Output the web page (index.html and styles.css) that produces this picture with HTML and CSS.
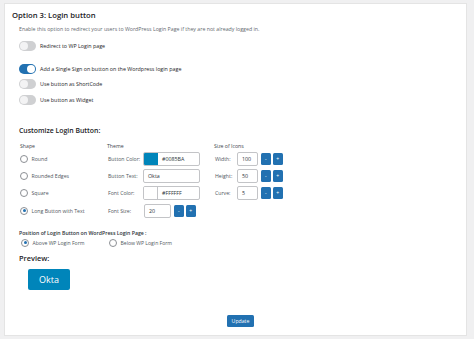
FILE: index.html
```html
<!DOCTYPE html>
<html>
<head>
<meta charset="utf-8">
<link rel="stylesheet" href="styles.css">
</head>
<body>
<div class="panel">
  <h2 class="title">Option 3: Login button</h2>
  <div class="content">
    <p class="desc">Enable this option to redirect your users to WordPress Login Page if they are not already logged in.</p>
    <div class="toggle-row first"><span class="switch"></span><span>Redirect to WP Login page</span></div>
    <div class="toggle-row second"><span class="switch on"></span><span>Add a Single Sign on button on the Wordpress login page</span></div>
    <div class="toggle-row"><span class="switch"></span><span>Use button as ShortCode</span></div>
    <div class="toggle-row"><span class="switch"></span><span>Use button as Widget</span></div>

    <h3 class="subtitle">Customize Login Button:</h3>
    <div class="grid">
      <div class="col shape">
        <div class="head">Shape</div>
        <div class="row"><span class="radio"></span>Round</div>
        <div class="row"><span class="radio"></span>Rounded Edges</div>
        <div class="row"><span class="radio"></span>Square</div>
        <div class="row last"><span class="radio checked"></span>Long Button with Text</div>
      </div>
      <div class="col theme">
        <div class="head">Theme</div>
        <div class="row"><span class="lbl">Button Color:</span><span class="input color"><span class="swatch blue"></span><span class="val">#0085BA</span></span></div>
        <div class="row"><span class="lbl">Button Text:</span><span class="input text"><span class="val">Okta</span></span></div>
        <div class="row"><span class="lbl">Font Color:</span><span class="input color"><span class="swatch white"></span><span class="val">#FFFFFF</span></span></div>
        <div class="row last"><span class="lbl">Font Size:</span><span class="input num fs"><span class="val">20</span></span><span class="btn">-</span><span class="btn">+</span></div>
      </div>
      <div class="col size">
        <div class="head">Size of Icons</div>
        <div class="row"><span class="lbl">Width:</span><span class="input num"><span class="val">100</span></span><span class="btn">-</span><span class="btn">+</span></div>
        <div class="row"><span class="lbl">Height:</span><span class="input num"><span class="val">50</span></span><span class="btn">-</span><span class="btn">+</span></div>
        <div class="row"><span class="lbl">Curve:</span><span class="input num"><span class="val">5</span></span><span class="btn">-</span><span class="btn">+</span></div>
      </div>
    </div>

    <div class="pos-label">Position of Login Button on WordPress Login Page :</div>
    <div class="pos-row">
      <span class="opt"><span class="radio checked"></span>Above WP Login Form</span>
      <span class="opt"><span class="radio"></span>Below WP Login Form</span>
    </div>

    <div class="preview-title">Preview:</div>
    <div class="okta">Okta</div>

    <div class="update">Update</div>
  </div>
</div>
</body>
</html>
```
FILE: styles.css
```css
html, body {
  margin: 0;
  padding: 0;
}
body {
  background: #f0f0f1;
  font-family: "Open Sans", "Liberation Sans", sans-serif;
  color: #3c434a;
  padding: 3px 7px 3px 4px;
  width: 474px;
  height: 339px;
  box-sizing: border-box;
  overflow: hidden;
}
.panel {
  background: #fff;
  border: 1px solid #e4e4e4;
  height: 333px;
  box-sizing: border-box;
  padding-top: 5px;
}
.title {
  margin: 0 0 0 7px;
  font-size: 7.7px;
  line-height: 12px;
  font-weight: 600;
  color: #1d2327;
}
.content {
  padding-left: 14px;
}
.desc {
  margin: 4px 0 0;
  font-size: 5.25px;
  line-height: 8px;
  color: #646970;
}
.toggle-row {
  display: flex;
  align-items: center;
  height: 11px;
  margin-top: 4.5px;
  font-size: 5.35px;
  color: #1d2327;
}
.toggle-row.first { margin-top: 7px; }
.toggle-row.second { margin-top: 12px; }
.switch {
  width: 17px;
  height: 10px;
  border-radius: 5px;
  background: #cfd0d2;
  position: relative;
  margin-right: 4px;
  flex: none;
}
.switch::after {
  content: "";
  position: absolute;
  left: 1px;
  top: 1px;
  width: 8px;
  height: 8px;
  border-radius: 50%;
  background: #f3f3f4;
}
.switch.on {
  background: #2271b1;
}
.switch.on::after {
  left: 8px;
  background: #fff;
}
.subtitle {
  margin: 19.5px 0 0;
  font-size: 6.9px;
  line-height: 12px;
  font-weight: 600;
  color: #1d2327;
}
.grid {
  display: grid;
  grid-template-columns: 88px 107px auto;
  margin-top: 5px;
}
.col {
  display: flex;
  flex-direction: column;
  gap: 3px;
}
.head {
  font-size: 5.2px;
  line-height: 8px;
  margin-bottom: -1px;
  color: #3c434a;
}
.row {
  display: flex;
  align-items: center;
  height: 14px;
  font-size: 5.2px;
  color: #50575e;
}
.row.last { margin-top: 1px; }
.shape .row, .shape .head { padding-left: 1px; }
.radio {
  width: 6px;
  height: 6px;
  border: 0.8px solid #8c8f94;
  border-radius: 50%;
  margin-right: 3.5px;
  flex: none;
  position: relative;
  background: #fff;
}
.radio.checked::after {
  content: "";
  position: absolute;
  left: 1.5px;
  top: 1.5px;
  width: 3px;
  height: 3px;
  border-radius: 50%;
  background: #2271b1;
}
.theme .lbl { width: 36px; flex: none; padding-left: 1px; box-sizing: border-box; }
.size .lbl { width: 23px; flex: none; padding-left: 1px; box-sizing: border-box; }
.input {
  display: flex;
  align-items: stretch;
  height: 14px;
  border: 0.8px solid #c3c4c7;
  border-radius: 2px;
  box-sizing: border-box;
  background: #fff;
  color: #2c3338;
  font-size: 5.3px;
  overflow: hidden;
}
.input .val {
  display: flex;
  align-items: center;
  padding-left: 4px;
}
.input.color, .input.text { width: 57px; }
.input.num { width: 21px; }
.input.fs { width: 27px; margin-left: 1px; }
.swatch {
  width: 13px;
  flex: none;
  border-right: 0.8px solid #c3c4c7;
}
.swatch.blue { background: #0085ba; border-right-color: #0085ba; }
.swatch.white { background: #fff; }
.color .val { padding-left: 4px; }
.btn {
  width: 9.5px;
  height: 12px;
  background: #2271b1;
  color: #fff;
  border-radius: 1.5px;
  font-size: 5px;
  display: flex;
  align-items: center;
  justify-content: center;
  margin-left: 3px;
  flex: none;
}
.btn + .btn { margin-left: 2.5px; }
.pos-label {
  margin-top: 11px;
  font-size: 5.2px;
  line-height: 8px;
  font-weight: 600;
  color: #2c3338;
}
.pos-row {
  display: flex;
  height: 10px;
  align-items: center;
  margin-top: 1px;
  font-size: 5.1px;
  color: #50575e;
}
.opt {
  display: flex;
  align-items: center;
  padding-left: 2px;
}
.opt:first-child { width: 86px; }
.preview-title {
  margin-top: 5px;
  font-size: 7.4px;
  line-height: 11px;
  font-weight: 600;
  color: #1d2327;
}
.okta {
  margin: 5.5px 0 0 9px;
  width: 42px;
  height: 21px;
  background: #0085ba;
  color: #fff;
  border-radius: 2px;
  font-size: 9px;
  display: flex;
  align-items: center;
  justify-content: center;
}
.update {
  margin: 25px 0 0 208px;
  width: 27px;
  height: 12px;
  background: #2271b1;
  color: #fff;
  border-radius: 1.5px;
  font-size: 5.2px;
  display: flex;
  align-items: center;
  justify-content: center;
}
```
